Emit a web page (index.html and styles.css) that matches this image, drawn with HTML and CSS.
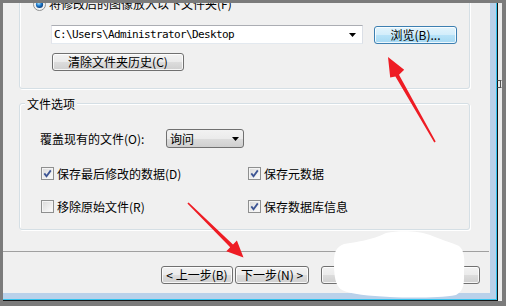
FILE: index.html
```html
<!DOCTYPE html>
<html lang="zh-CN">
<head>
    <meta charset="UTF-8">
    <meta name="viewport" content="width=device-width, initial-scale=1.0">
    <title>文件选项</title>
    <link rel="stylesheet" href="styles.css">
</head>
<body>
    <div class="screen">
        <div class="desktop">
            <div class="window">
                <div class="frame">
                    <div class="content">
                        <!-- Output folder -->
                        <div class="group group-folder">
                            <div class="radio-row">
                                <svg class="radio" width="13" height="13" viewBox="0 0 13 13">
                                    <defs>
                                        <radialGradient id="dot" cx="0.4" cy="0.35" r="0.65">
                                            <stop offset="0" stop-color="#9fe0ff"/>
                                            <stop offset="0.55" stop-color="#1c78cc"/>
                                            <stop offset="1" stop-color="#0b3f7e"/>
                                        </radialGradient>
                                        <linearGradient id="box" x1="0" y1="0" x2="1" y2="1">
                                            <stop offset="0" stop-color="#dcdcdc"/>
                                            <stop offset="1" stop-color="#fafafa"/>
                                        </linearGradient>
                                    </defs>
                                    <circle cx="6.5" cy="6.5" r="6" fill="#f2f2f2" stroke="#8e8f8f"/>
                                    <circle cx="6.5" cy="6.5" r="3.6" fill="url(#dot)"/>
                                </svg>
                                <span>将修改后的图像放入以下文件夹(F)</span>
                            </div>
                            <div class="path-row">
                                <div class="combo">
                                    <span class="combo-text">C:\Users\Administrator\Desktop</span>
                                    <svg class="arrow" width="7" height="4" viewBox="0 0 7 4"><polygon points="0,0 7,0 3.5,4" fill="#000"/></svg>
                                </div>
                                <button class="btn btn-hot btn-browse">浏览(B)...</button>
                            </div>
                            <button class="btn btn-clear">清除文件夹历史(C)</button>
                        </div>

                        <!-- File options -->
                        <div class="group group-options">
                            <div class="group-title">文件选项</div>
                            <div class="option-row">
                                <span class="option-label">覆盖现有的文件(O):</span>
                                <div class="select">
                                    <span>询问</span>
                                    <svg class="arrow" width="7" height="4" viewBox="0 0 7 4"><polygon points="0,0 7,0 3.5,4" fill="#000"/></svg>
                                </div>
                            </div>
                            <div class="checks">
                                <div class="check">
                                    <svg width="13" height="13" viewBox="0 0 13 13"><rect x="0.5" y="0.5" width="12" height="12" fill="#f4f4f4" stroke="#8e8f8f"/><rect x="2" y="2" width="9" height="9" fill="url(#box)"/><path d="M3.3 6.4 L5.5 9.2 L9.8 3.4" fill="none" stroke="#3d5594" stroke-width="1.8"/></svg>
                                    <span>保存最后修改的数据(D)</span>
                                </div>
                                <div class="check">
                                    <svg width="13" height="13" viewBox="0 0 13 13"><rect x="0.5" y="0.5" width="12" height="12" fill="#f4f4f4" stroke="#8e8f8f"/><rect x="2" y="2" width="9" height="9" fill="url(#box)"/><path d="M3.3 6.4 L5.5 9.2 L9.8 3.4" fill="none" stroke="#3d5594" stroke-width="1.8"/></svg>
                                    <span>保存元数据</span>
                                </div>
                                <div class="check">
                                    <svg width="13" height="13" viewBox="0 0 13 13"><rect x="0.5" y="0.5" width="12" height="12" fill="#f4f4f4" stroke="#8e8f8f"/><rect x="2" y="2" width="9" height="9" fill="url(#box)"/></svg>
                                    <span>移除原始文件(R)</span>
                                </div>
                                <div class="check">
                                    <svg width="13" height="13" viewBox="0 0 13 13"><rect x="0.5" y="0.5" width="12" height="12" fill="#f4f4f4" stroke="#8e8f8f"/><rect x="2" y="2" width="9" height="9" fill="url(#box)"/><path d="M3.3 6.4 L5.5 9.2 L9.8 3.4" fill="none" stroke="#3d5594" stroke-width="1.8"/></svg>
                                    <span>保存数据库信息</span>
                                </div>
                            </div>
                        </div>

                        <div class="separator"></div>

                        <!-- Wizard buttons -->
                        <div class="actions">
                            <button class="btn btn-prev">&lt; 上一步(B)</button>
                            <button class="btn btn-next">下一步(N) &gt;</button>
                            <button class="btn btn-finish">完成</button>
                            <button class="btn btn-cancel">取消</button>
                        </div>
                    </div>
                </div>
            </div>
            <div class="edge"></div>
        </div>

        <!-- Annotations drawn over the screenshot -->
        <svg class="marks" width="506" height="306" viewBox="0 0 506 306">
            <polygon fill="#ee1c24" points="388,57 404.2,69.7 399,74.7 435.7,141.6 434.3,142.4 395.4,76.5 390.2,77.5"/>
            <polygon fill="#ee1c24" points="243.5,257.5 226.3,251.2 230.2,247.2 187.4,203.6 188.6,202.4 233,244.4 236.9,240.4"/>
            <path fill="#fff" d="M386 233 C400 230 420 231 430 235 C440 239 452 243 459 246 C464 250 465 258 464 270 C464 282 465 290 456 295 C440 298 410 298 390 297 C370 296 350 294 342 290 C335 286 334 275 334 262 C334 252 336 247 344 244 C356 242 372 240 386 233 Z"/>
            <path fill="none" stroke="#555" d="M497.5 80.5 H501.5 M497.5 87.5 H501.5 M500.5 80.5 V87.5"/>
        </svg>
    </div>
</body>
</html>
```

FILE: styles.css
```css
body {
    margin: 0;
    font-family: "Noto Sans CJK SC", sans-serif;
    font-size: 12px;
    color: #000;
}

.screen {
    position: relative;
    width: 506px;
    height: 306px;
    background-color: #7b7b7b;
    overflow: hidden;
}

.desktop {
    display: flex;
    padding: 3px 0 0 3px;
}

.window {
    width: 495px;
    height: 298px;
    box-sizing: border-box;
    border-right: 1px solid #141414;
    border-bottom: 1px solid #141414;
}

.frame {
    height: 100%;
    box-sizing: border-box;
    padding: 0 6px 6px 0;
    background-color: #b9d1ea;
    border-right: 1px solid #33c3ee;
    border-bottom: 1px solid #33c3ee;
}

.content {
    width: 487px;
    height: 290px;
    box-sizing: border-box;
    padding: 0 20px 0 16px;
    background-color: #f0f0f0;
    overflow: hidden;
}

.edge {
    width: 4px;
    height: 298px;
    background-color: #ebebeb;
}

.group {
    border: 1px solid #d5dfe5;
    border-radius: 3px;
    box-shadow: inset 1px 1px 0 #fff, 1px 1px 0 #fff;
}

.group-folder {
    margin-top: -17px;
    padding: 10px 0 17px 13px;
}

.radio-row {
    display: flex;
    align-items: center;
    height: 14px;
    line-height: 14px;
}

.radio-row span {
    margin-left: 3px;
}

.path-row {
    display: flex;
    align-items: flex-start;
    margin: 14px 0 0 18px;
}

.combo {
    display: flex;
    align-items: center;
    width: 312px;
    height: 19px;
    box-sizing: border-box;
    padding: 0 6px 0 2px;
    background-color: #fff;
    border: 1px solid;
    border-color: #abadb3 #dbdfe6 #e3e9ef #e2e3ea;
}

.combo-text {
    flex: 1;
    font-family: "DejaVu Sans Mono", monospace;
    font-size: 11px;
    letter-spacing: -0.62px;
}

.btn {
    height: 18px;
    box-sizing: border-box;
    padding: 0;
    font-family: "Noto Sans CJK SC", sans-serif;
    font-size: 12px;
    line-height: 16px;
    color: #000;
    border: 1px solid #707070;
    border-radius: 3px;
    background: linear-gradient(#f2f2f2 0%, #ebebeb 50%, #dddddd 50%, #cfcfcf 100%);
    box-shadow: inset 0 0 0 1px rgba(255, 255, 255, 0.8);
}

.btn-hot {
    border-color: #3c7fb1;
    background: linear-gradient(#e3f4fc 0%, #d2edfb 50%, #b8e3f8 50%, #a5d8f3 100%);
}

.btn-browse {
    width: 83px;
    margin: 1px 0 0 11px;
}

.btn-clear {
    display: block;
    width: 132px;
    margin: 9px 0 0 19px;
}

.group-options {
    margin-top: 14px;
    padding: 0 0 15px 20px;
}

.group-title {
    width: fit-content;
    height: 17px;
    line-height: 17px;
    margin: -9px 0 0 -15px;
    padding: 0 2px;
    background-color: #f0f0f0;
}

.option-row {
    display: flex;
    align-items: center;
    height: 19px;
    margin-top: 17px;
}

.option-label {
    width: 126px;
}

.select {
    display: flex;
    align-items: center;
    justify-content: space-between;
    width: 78px;
    height: 19px;
    box-sizing: border-box;
    padding: 0 4px 0 3px;
    border: 1px solid #707070;
    border-radius: 3px;
    background: linear-gradient(#f2f2f2 0%, #ebebeb 50%, #dddddd 50%, #cfcfcf 100%);
}

.checks {
    display: grid;
    grid-template-columns: 207px auto;
    row-gap: 17px;
    margin: 17px 0 0 1px;
}

.check {
    display: flex;
    align-items: center;
    height: 16px;
}

.check span {
    margin-left: 3px;
}

.separator {
    margin: 21px -19px 0 -16px;
    border-top: 1px solid #a0a0a0;
}

.actions {
    display: flex;
    justify-content: flex-end;
    margin: 14px -10px 0 0;
}

.btn-prev {
    width: 72px;
}

.btn-next {
    width: 74px;
    margin-left: 2px;
}

.btn-finish {
    width: 76px;
    margin-left: 12px;
}

.btn-cancel {
    width: 75px;
    margin-left: 8px;
}

.marks {
    position: absolute;
    left: 0;
    top: 0;
    pointer-events: none;
}
```
